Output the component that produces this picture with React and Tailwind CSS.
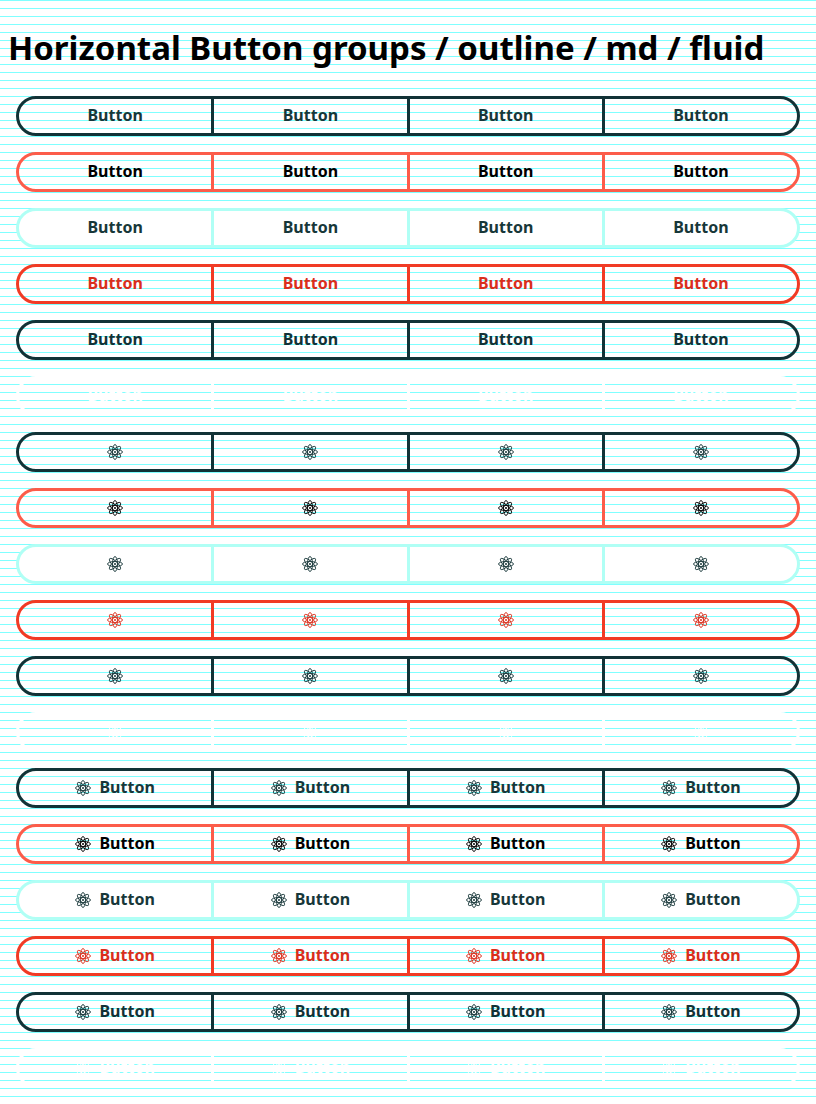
const THEMES = [
  { name: "primary", group: "text-[#173739]", cell: "border-[#123236]" },
  { name: "accent", group: "text-black", cell: "border-[#fc5c4a]" },
  { name: "light", group: "text-[#173739]", cell: "border-[#b0fff5] bg-white" },
  { name: "danger", group: "text-[#d92f1c]", cell: "border-[#f13b25]" },
  { name: "dark", group: "text-[#123236]", cell: "border-[#123236]" },
  { name: "inverse", group: "text-white", cell: "border-white" },
];

const VARIANTS = [
  { name: "text", icon: false, label: true },
  { name: "icon", icon: true, label: false },
  { name: "icon-text", icon: true, label: true },
];

function AtomIcon() {
  return (
    <svg viewBox="0 0 32 32" className="size-4 shrink-0" fill="none" stroke="currentColor" strokeWidth="1.8" aria-hidden="true">
      <ellipse cx="16" cy="16" rx="5" ry="15" />
      <ellipse cx="16" cy="16" rx="15" ry="5" />
      <ellipse cx="16" cy="16" rx="5.2" ry="15" transform="rotate(45 16 16)" />
      <ellipse cx="16" cy="16" rx="5.2" ry="15" transform="rotate(-45 16 16)" />
      <circle cx="16" cy="16" r="2" fill="currentColor" stroke="none" />
    </svg>
  );
}

function ButtonGroup({ theme, variant }) {
  return (
    <div role="group" aria-label={theme.name} className={`flex h-10 ${theme.group}`}>
      {[1, 2, 3, 4].map((n) => (
        <button
          key={n}
          type="button"
          aria-label={variant.label ? undefined : "Button"}
          className={`-ml-[3px] flex flex-1 items-center justify-center gap-2 border-[3px] text-base leading-5 font-bold first:ml-0 first:rounded-l-full last:rounded-r-full ${theme.cell}`}
        >
          {variant.icon && <AtomIcon />}
          {variant.label && <span className="pb-0.5">Button</span>}
        </button>
      ))}
    </div>
  );
}

export default function App() {
  return (
    <main className="min-h-screen bg-white bg-[repeating-linear-gradient(to_bottom,#80ffff_0px,#80ffff_1px,transparent_1px,transparent_8px)] pb-4 font-['Noto_Sans',sans-serif]">
      <h1 className="px-2 py-7 text-[33px] leading-10 font-bold text-black">
        Horizontal Button groups / outline / md / fluid
      </h1>
      <div className="flex flex-col gap-4 px-4">
        {VARIANTS.flatMap((variant) =>
          THEMES.map((theme) => (
            <ButtonGroup key={`${variant.name}-${theme.name}`} theme={theme} variant={variant} />
          ))
        )}
      </div>
    </main>
  );
}
